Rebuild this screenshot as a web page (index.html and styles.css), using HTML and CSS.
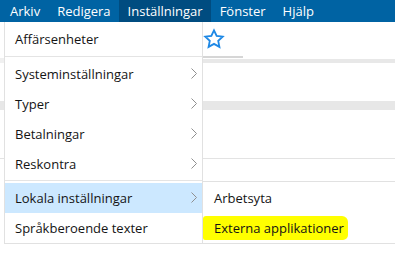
FILE: index.html
```html
<!DOCTYPE html>
<html lang="sv">
<head>
  <meta charset="UTF-8">
  <title>Inställningar</title>
  <link rel="stylesheet" href="styles.css">
</head>
<body>
  <div class="menubar">
    <span class="menu-item">Arkiv</span>
    <span class="menu-item">Redigera</span>
    <span class="menu-item active">Inställningar</span>
    <span class="menu-item">Fönster</span>
    <span class="menu-item">Hjälp</span>
  </div>

  <div class="workspace">
    <div class="toolbar">
      <svg class="star" width="22" height="22" viewBox="0 0 24 24">
        <path d="M12 2.5l2.9 6.1 6.6.8-4.9 4.6 1.3 6.6L12 17.3l-5.9 3.3 1.3-6.6-4.9-4.6 6.6-.8z" fill="none" stroke="#1e88e5" stroke-width="2" stroke-linejoin="miter"/>
      </svg>
    </div>
    <div class="tab-row">
      <div class="tab-line"></div>
    </div>
    <div class="band"></div>
    <div class="panel">
      <div class="panel-head"></div>
      <div class="panel-body"></div>
    </div>
  </div>

  <div class="dropdown">
    <div class="dd-item first">Affärsenheter</div>
    <div class="sep"></div>
    <div class="dd-item">Systeminställningar <svg class="chev" width="6" height="11" viewBox="0 0 6 11"><path d="M0.5 0.5L5.5 5.5L0.5 10.5" fill="none" stroke="#8f8f8f"/></svg></div>
    <div class="dd-item">Typer <svg class="chev" width="6" height="11" viewBox="0 0 6 11"><path d="M0.5 0.5L5.5 5.5L0.5 10.5" fill="none" stroke="#8f8f8f"/></svg></div>
    <div class="dd-item">Betalningar <svg class="chev" width="6" height="11" viewBox="0 0 6 11"><path d="M0.5 0.5L5.5 5.5L0.5 10.5" fill="none" stroke="#8f8f8f"/></svg></div>
    <div class="dd-item">Reskontra <svg class="chev" width="6" height="11" viewBox="0 0 6 11"><path d="M0.5 0.5L5.5 5.5L0.5 10.5" fill="none" stroke="#8f8f8f"/></svg></div>
    <div class="sep second"></div>
    <div class="dd-item hover">Lokala inställningar <svg class="chev" width="6" height="11" viewBox="0 0 6 11"><path d="M0.5 0.5L5.5 5.5L0.5 10.5" fill="none" stroke="#8f8f8f"/></svg>
      <div class="submenu">
        <div class="sub-item">Arbetsyta</div>
        <div class="sub-item"><span class="marker">Externa applikationer</span></div>
      </div>
    </div>
    <div class="dd-item">Språkberoende texter</div>
  </div>
</body>
</html>
```

FILE: styles.css
```css
body {
  margin: 0;
  background: #ffffff;
  font-family: 'Open Sans', 'Noto Sans', sans-serif;
  font-size: 13px;
  color: #141414;
  position: relative;
  overflow: hidden;
  height: 258px;
}

.menubar {
  display: flex;
  height: 22px;
  background: #0063a3;
  color: #ffffff;
  padding-left: 1px;
}
.menu-item {
  display: flex;
  align-items: center;
  padding: 0 8px 0 9px;
  line-height: 22px;
}
.menu-item.active {
  background: #004c80;
}

.workspace {
  background: #f0f0f0;
  height: 236px;
}
.toolbar {
  background: #ffffff;
  height: 33px;
  padding-left: 203px;
  display: flex;
  align-items: center;
}
.tab-row {
  background: #ffffff;
  height: 3px;
}
.tab-line {
  height: 1px;
  border-bottom: 2px solid #d6d6d6;
  margin-left: 203px;
  width: 40px;
}
.band {
  height: 4px;
  background: #e8e8e8;
  margin-left: 203px;
  border-top: 1px solid #ffffff;
}
.panel {
  background: #ffffff;
  height: 200px;
}
.panel-head {
  height: 38px;
  border-bottom: 9px solid #e7e7e7;
}
.panel-body {
  height: 48px;
  border-bottom: 1px solid #e3e3e3;
}

.dropdown {
  position: absolute;
  top: 22px;
  left: 4px;
  width: 197px;
  background: #ffffff;
  border: 1px solid #e1e1e1;
  border-top: none;
}
.dd-item {
  position: relative;
  height: 30px;
  line-height: 30px;
  padding-left: 10px;
}
.dd-item.first {
  height: 34px;
  line-height: 34px;
}
.dd-item.hover {
  background: #cce8ff;
}
.chev {
  position: absolute;
  right: 5px;
  top: 9px;
}
.sep {
  height: 1px;
  background: #e4e4e4;
  margin-bottom: 2px;
}
.sep.second {
  margin-top: 1px;
}

.submenu {
  position: absolute;
  left: 197px;
  top: -2px;
  width: 200px;
  background: #ffffff;
  border: 1px solid #e1e1e1;
  padding-top: 1px;
}
.sub-item {
  height: 30px;
  line-height: 30px;
  padding-left: 11px;
}
.marker {
  background: #ffff00;
  margin-left: -11px;
  padding: 3px 4px 3px 11px;
  border-radius: 3px 6px 5px 2px;
}
```
